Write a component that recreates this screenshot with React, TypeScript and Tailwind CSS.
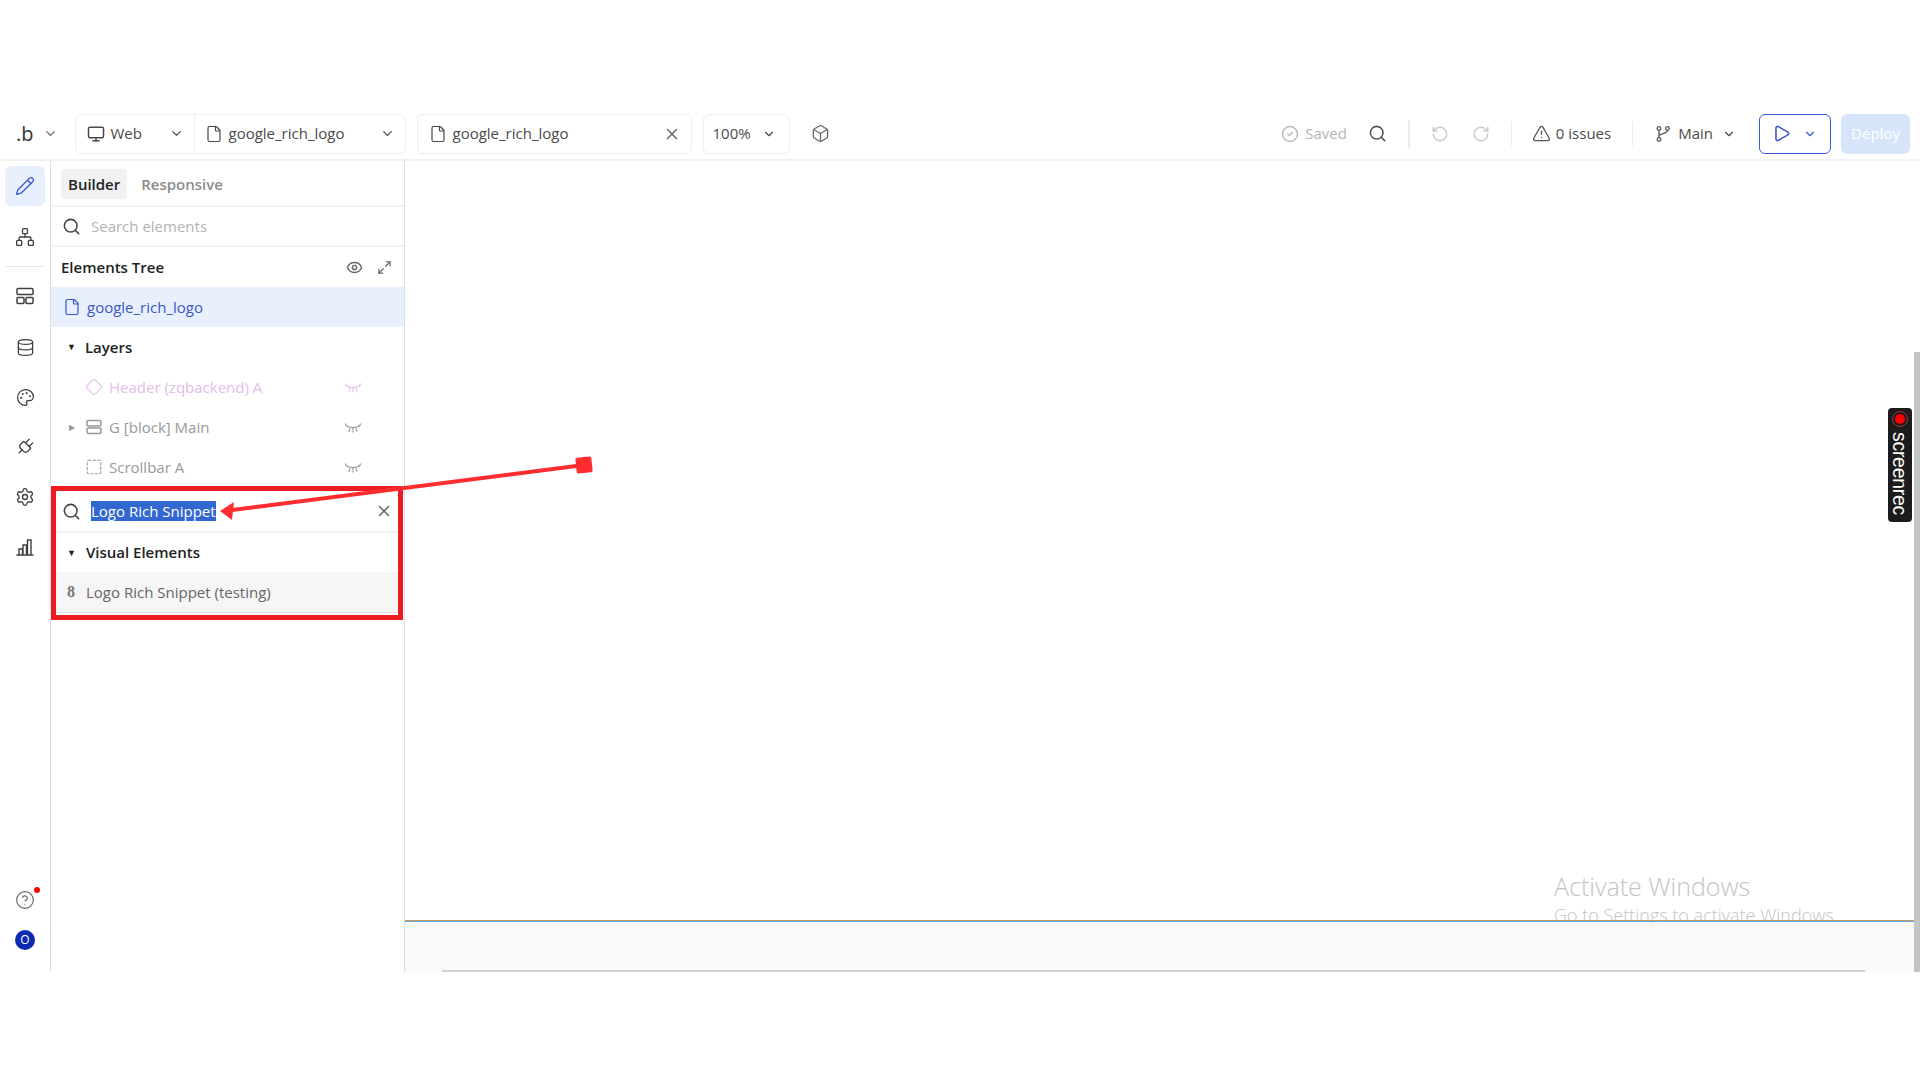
import {
  Box, ChevronDown, CircleCheck, CircleHelp, Database, Diamond, Eye, File, Maximize2, Monitor, Network,
  Palette, Pencil, Play, Plug, RotateCcw, RotateCw, Search, Settings, Square, TriangleAlert, X,
} from 'lucide-react';
import type { ReactNode } from 'react';

function EyeClosed({ className = '' }: { className?: string }) {
  return (
    <svg viewBox="0 0 18 12" className={`h-[12px] w-[18px] ${className}`} fill="none" stroke="currentColor" strokeWidth="1.1">
      <path d="M1.500 3.500c4.500 2.500 10.500 2.500 15 0" />
      <path d="M1 1.500l2.500 3M17 1.500l-2.500 3M6 5.500L5 10M12 5.500l1 4.500M9 6v4.500" />
    </svg>
  );
}

function LayoutIcon() {
  return (
    <svg viewBox="0 0 20 20" className="h-5 w-5" fill="none" stroke="currentColor" strokeWidth="1.5">
      <rect x="2" y="2.500" width="16" height="6" rx="1" />
      <rect x="2" y="11.500" width="7" height="6" rx="1" />
      <rect x="11" y="11.500" width="7" height="6" rx="1" />
    </svg>
  );
}

function BarsIcon() {
  return (
    <svg viewBox="0 0 20 20" className="h-5 w-5" fill="none" stroke="currentColor" strokeWidth="1.4">
      <path d="M1.500 18h17M4 18v-6h3.500v6M8 18V8h3.500v10M12.500 18V3H16v15" />
    </svg>
  );
}

function BlockIcon() {
  return (
    <svg viewBox="0 0 18 18" className="h-[18px] w-[18px]" fill="none" stroke="currentColor" strokeWidth="1.6">
      <rect x="2" y="2.500" width="14" height="5.500" rx="1.500" />
      <rect x="2" y="10" width="14" height="5.500" rx="1.500" />
    </svg>
  );
}

function BranchIcon() {
  return (
    <svg viewBox="0 0 16 18" className="h-[18px] w-4" fill="none" stroke="currentColor" strokeWidth="1.3">
      <circle cx="4" cy="3.500" r="1.800" />
      <circle cx="12.500" cy="3.500" r="1.800" />
      <circle cx="4" cy="14.500" r="1.800" />
      <path d="M4 5.300v7.400M12.500 5.300c0 4-8.500 2.500-8.500 6" />
    </svg>
  );
}

function RailIcon({ children, active = false }: { children: ReactNode; active?: boolean }) {
  return (
    <div className={`flex h-10 w-10 items-center justify-center rounded-md ${active ? 'bg-[#e8f0fd] text-[#3b55c8]' : 'text-[#3f3f3f]'}`}>
      {children}
    </div>
  );
}

function Rail() {
  return (
    <aside className="flex w-[50px] shrink-0 flex-col items-center pt-[5px]">
      <RailIcon active><Pencil size={20} strokeWidth={1.6} /></RailIcon>
      <div className="mt-[11px]"><RailIcon><Network size={20} strokeWidth={1.6} /></RailIcon></div>
      <div className="mt-[9px] h-px w-10 bg-[#e8e8e8]" />
      <div className="mt-[9px]"><RailIcon><LayoutIcon /></RailIcon></div>
      <div className="mt-[11px]"><RailIcon><Database size={19} strokeWidth={1.6} /></RailIcon></div>
      <div className="mt-[10px]"><RailIcon><Palette size={19} strokeWidth={1.6} /></RailIcon></div>
      <div className="mt-[10px]"><RailIcon><Plug size={20} strokeWidth={1.6} className="rotate-45" /></RailIcon></div>
      <div className="mt-[10px]"><RailIcon><Settings size={20} strokeWidth={1.6} /></RailIcon></div>
      <div className="mt-[10px]"><RailIcon><BarsIcon /></RailIcon></div>
      <div className="relative mt-auto">
        <RailIcon><CircleHelp size={20} strokeWidth={1.4} className="text-[#666]" /></RailIcon>
        <span className="absolute right-[5px] top-[7px] h-[6px] w-[6px] rounded-full bg-[#ff0000]" />
      </div>
      <div className="mb-[22px] mt-[10px] flex h-5 w-5 items-center justify-center rounded-full bg-[#0c2bb0] text-[12px] text-white">O</div>
    </aside>
  );
}

function LayerRow({ icon, label, caret = false, tone }: { icon: ReactNode; label: string; caret?: boolean; tone: string }) {
  return (
    <div className={`flex h-10 items-center pl-[18px] pr-[42px] text-[15px] ${tone}`}>
      <span className="w-[16px] text-[8px] text-[#999]">{caret ? '▶' : ''}</span>
      <span className="mr-[6px] flex w-[18px] justify-center">{icon}</span>
      <span>{label}</span>
      <EyeClosed className="ml-auto mt-[2px]" />
    </div>
  );
}

function Panel() {
  return (
    <section className="flex w-[355px] shrink-0 flex-col border-x border-[#dedede]">
      <div className="flex h-[46px] items-center gap-[7px] border-b-2 border-[#f2f2f2] pl-[10px] pt-[2px] text-[15px] font-semibold">
        <span className="flex h-[30px] items-center rounded bg-[#f2f2f2] px-[7px] text-[#222]">Builder</span>
        <span className="px-[7px] text-[#8c8c8c]">Responsive</span>
      </div>
      <div className="flex h-[40px] items-center gap-[10px] border-b-2 border-[#f2f2f2] pl-[11px] text-[15px] text-[#b3b3b3]">
        <Search size={19} className="text-[#444]" />
        <span>Search elements</span>
      </div>
      <div className="flex h-[40px] items-center pl-[10px] pr-[12px] text-[15px] font-semibold text-[#222]">
        <span>Elements Tree</span>
        <Eye size={17} className="ml-auto text-[#666]" />
        <Maximize2 size={15} className="ml-[14px] text-[#666]" />
      </div>
      <div className="flex h-[40px] items-center gap-[6px] bg-[#e8f0fd] pl-[12px] text-[15px] text-[#3b55c8]">
        <File size={18} strokeWidth={1.6} />
        <span>google_rich_logo</span>
      </div>
      <div className="flex h-[40px] items-center pl-[16px] text-[15px] font-semibold text-[#222]">
        <span className="mr-[9px] text-[9px] text-[#222]">▼</span>
        <span>Layers</span>
      </div>
      <LayerRow tone="text-[#e3bdea]" label="Header (zqbackend) A" icon={<Diamond size={20} strokeWidth={1.5} />} />
      <LayerRow tone="text-[#999]" label="G [block] Main" caret icon={<BlockIcon />} />
      <LayerRow tone="text-[#999]" label="Scrollbar A" icon={<Square size={18} strokeWidth={1.5} strokeDasharray="3 3" />} />
      <div className="-mt-[1px] mr-[1px] h-[134px] border-[5px] border-[#ec1c24]">
        <div className="flex h-[42px] items-center border-b-2 border-[#f2f2f2] pl-[6px] pr-[5px] text-[15px]">
          <Search size={19} className="mr-[10px] text-[#444]" />
          <span className="bg-[#3367d1] leading-[20px] text-white">Logo Rich Snippet</span>
          <X size={18} className="ml-auto text-[#666]" />
        </div>
        <div className="flex h-[39px] items-center pl-[11px] text-[15px] font-semibold text-[#222]">
          <span className="mr-[10px] text-[9px]">▼</span>
          <span>Visual Elements</span>
        </div>
        <div className="flex h-[41px] items-center border-b border-[#e5e5e5] bg-[#f6f6f6] pl-[11px] text-[15px] text-[#666]">
          <span className="mr-[10px] w-[9px] font-['Liberation_Serif',serif] text-[16px] font-bold text-[#777]">8</span>
          <span>Logo Rich Snippet (testing)</span>
        </div>
      </div>
    </section>
  );
}

function Toolbar() {
  return (
    <header className="flex h-[61px] items-center border-b-2 border-[#f2f2f2] pt-[8px] text-[15px] text-[#4a4a4a]">
      <span className="ml-[16px] text-[20px] font-normal leading-none text-[#333]">.b</span>
      <ChevronDown size={15} className="ml-[9px] text-[#666]" />
      <div className="ml-[17px] flex h-10 w-[331px] items-center rounded-md border border-[#eeeeee]">
        <div className="flex h-full w-[119px] items-center border-r border-[#eeeeee] pl-[11px] pr-[10px]">
          <Monitor size={18} className="mr-[6px]" />
          <span>Web</span>
          <ChevronDown size={15} className="ml-auto" />
        </div>
        <div className="flex h-full flex-1 items-center pl-[10px] pr-[10px]">
          <File size={18} strokeWidth={1.6} className="mr-[6px]" />
          <span>google_rich_logo</span>
          <ChevronDown size={15} className="ml-auto" />
        </div>
      </div>
      <div className="ml-[11px] flex h-10 w-[275px] items-center rounded-md border border-[#eeeeee] pl-[11px] pr-[10px]">
        <File size={18} strokeWidth={1.6} className="mr-[6px]" />
        <span>google_rich_logo</span>
        <X size={18} className="ml-auto text-[#666]" />
      </div>
      <div className="ml-[11px] flex h-10 w-[87px] items-center rounded-md border border-[#eeeeee] pl-[9px] pr-[13px]">
        <span>100%</span>
        <ChevronDown size={14} className="ml-auto" />
      </div>
      <Box size={19} strokeWidth={1.6} className="ml-[21px] text-[#666]" />
      <div className="ml-auto flex items-center">
        <CircleCheck size={18} className="text-[#bbbbbb]" />
        <span className="ml-[6px] font-medium text-[#b5b5b5]">Saved</span>
        <Search size={19} className="ml-[21px] text-[#555]" />
        <div className="ml-[21px] h-[28px] w-[2px] bg-[#ececec]" />
        <RotateCcw size={18} className="ml-[21px] text-[#cccccc]" />
        <RotateCw size={18} className="ml-[23px] text-[#cccccc]" />
        <div className="ml-[21px] h-[24px] w-px bg-[#ececec]" />
        <TriangleAlert size={19} strokeWidth={1.6} className="ml-[20px] text-[#555]" />
        <span className="ml-[5px] font-medium">0 issues</span>
        <div className="ml-[21px] h-[24px] w-px bg-[#ececec]" />
        <div className="ml-[22px] text-[#555]"><BranchIcon /></div>
        <span className="ml-[7px] font-medium">Main</span>
        <ChevronDown size={14} className="ml-[9px]" />
        <div className="ml-[23px] flex h-10 w-[72px] items-center rounded-md border border-[#3b5bd6] pl-[12px] text-[#3b55c8]">
          <Play size={19} />
          <ChevronDown size={14} className="ml-[12px]" />
        </div>
        <div className="ml-[10px] mr-[10px] flex h-10 w-[69px] items-center justify-center rounded-md bg-[#d7e5fb] font-medium text-white">Deploy</div>
      </div>
    </header>
  );
}

function Canvas() {
  return (
    <main className="relative flex min-w-0 flex-1">
      <div className="relative flex min-w-0 flex-1 flex-col">
        <div className="flex-1" />
        <div className="absolute left-[1149px] top-[709px] font-['Open_Sans',sans-serif] font-light text-[#c4c4c4]">
          <div className="text-[25px] leading-[32px]">Activate Windows</div>
          <div className="text-[18px] leading-[26px]">Go to Settings to activate Windows.</div>
        </div>
        <div className="relative h-[52px] border-t border-[#c89a66] bg-[#f9f9f9]/85">
          <div className="h-px bg-[#5aa9e6]" />
          <div className="absolute bottom-0 left-[37px] h-[2px] w-[1423px] bg-[#d2d2d2]" />
        </div>
      </div>
      <div className="flex w-[6px] shrink-0 flex-col">
        <div className="h-[191px]" />
        <div className="flex-1 bg-[#c4c4c4]" />
      </div>
      <div className="absolute right-[8px] top-[247px] flex h-[114px] w-6 flex-col items-center overflow-hidden rounded bg-[#1c1c1c] pt-[3px]">
        <span className="flex h-[16px] w-[16px] shrink-0 items-center justify-center rounded-full border border-[#a33]">
          <span className="h-[10px] w-[10px] rounded-full bg-[#ff0000]" />
        </span>
        <span className="mt-[5px] font-['Liberation_Sans',sans-serif] text-[19.500px] leading-[22px] tracking-[-0.3px] text-white [writing-mode:vertical-rl]">screenrec</span>
      </div>
    </main>
  );
}

export default function App() {
  return (
    <div className="relative h-[1080px] w-[1920px] overflow-hidden bg-white font-['Open_Sans',sans-serif]">
      <div className="h-[100px]" />
      <Toolbar />
      <div className="flex h-[811px]">
        <Rail />
        <Panel />
        <Canvas />
      </div>
      {/* annotation arrow drawn over the panel */}
      <svg className="pointer-events-none absolute left-0 top-0" width="1920" height="1080" fill="none">
        <path d="M584 465 L232 510" stroke="#ff2d30" strokeWidth="4" />
        <path d="M220 511 L234 502 L232 520 Z" fill="#ff2d30" />
        <rect x="576" y="457" width="16" height="16" rx="2" fill="#ff2d30" transform="rotate(-6 584 465)" />
      </svg>
    </div>
  );
}
